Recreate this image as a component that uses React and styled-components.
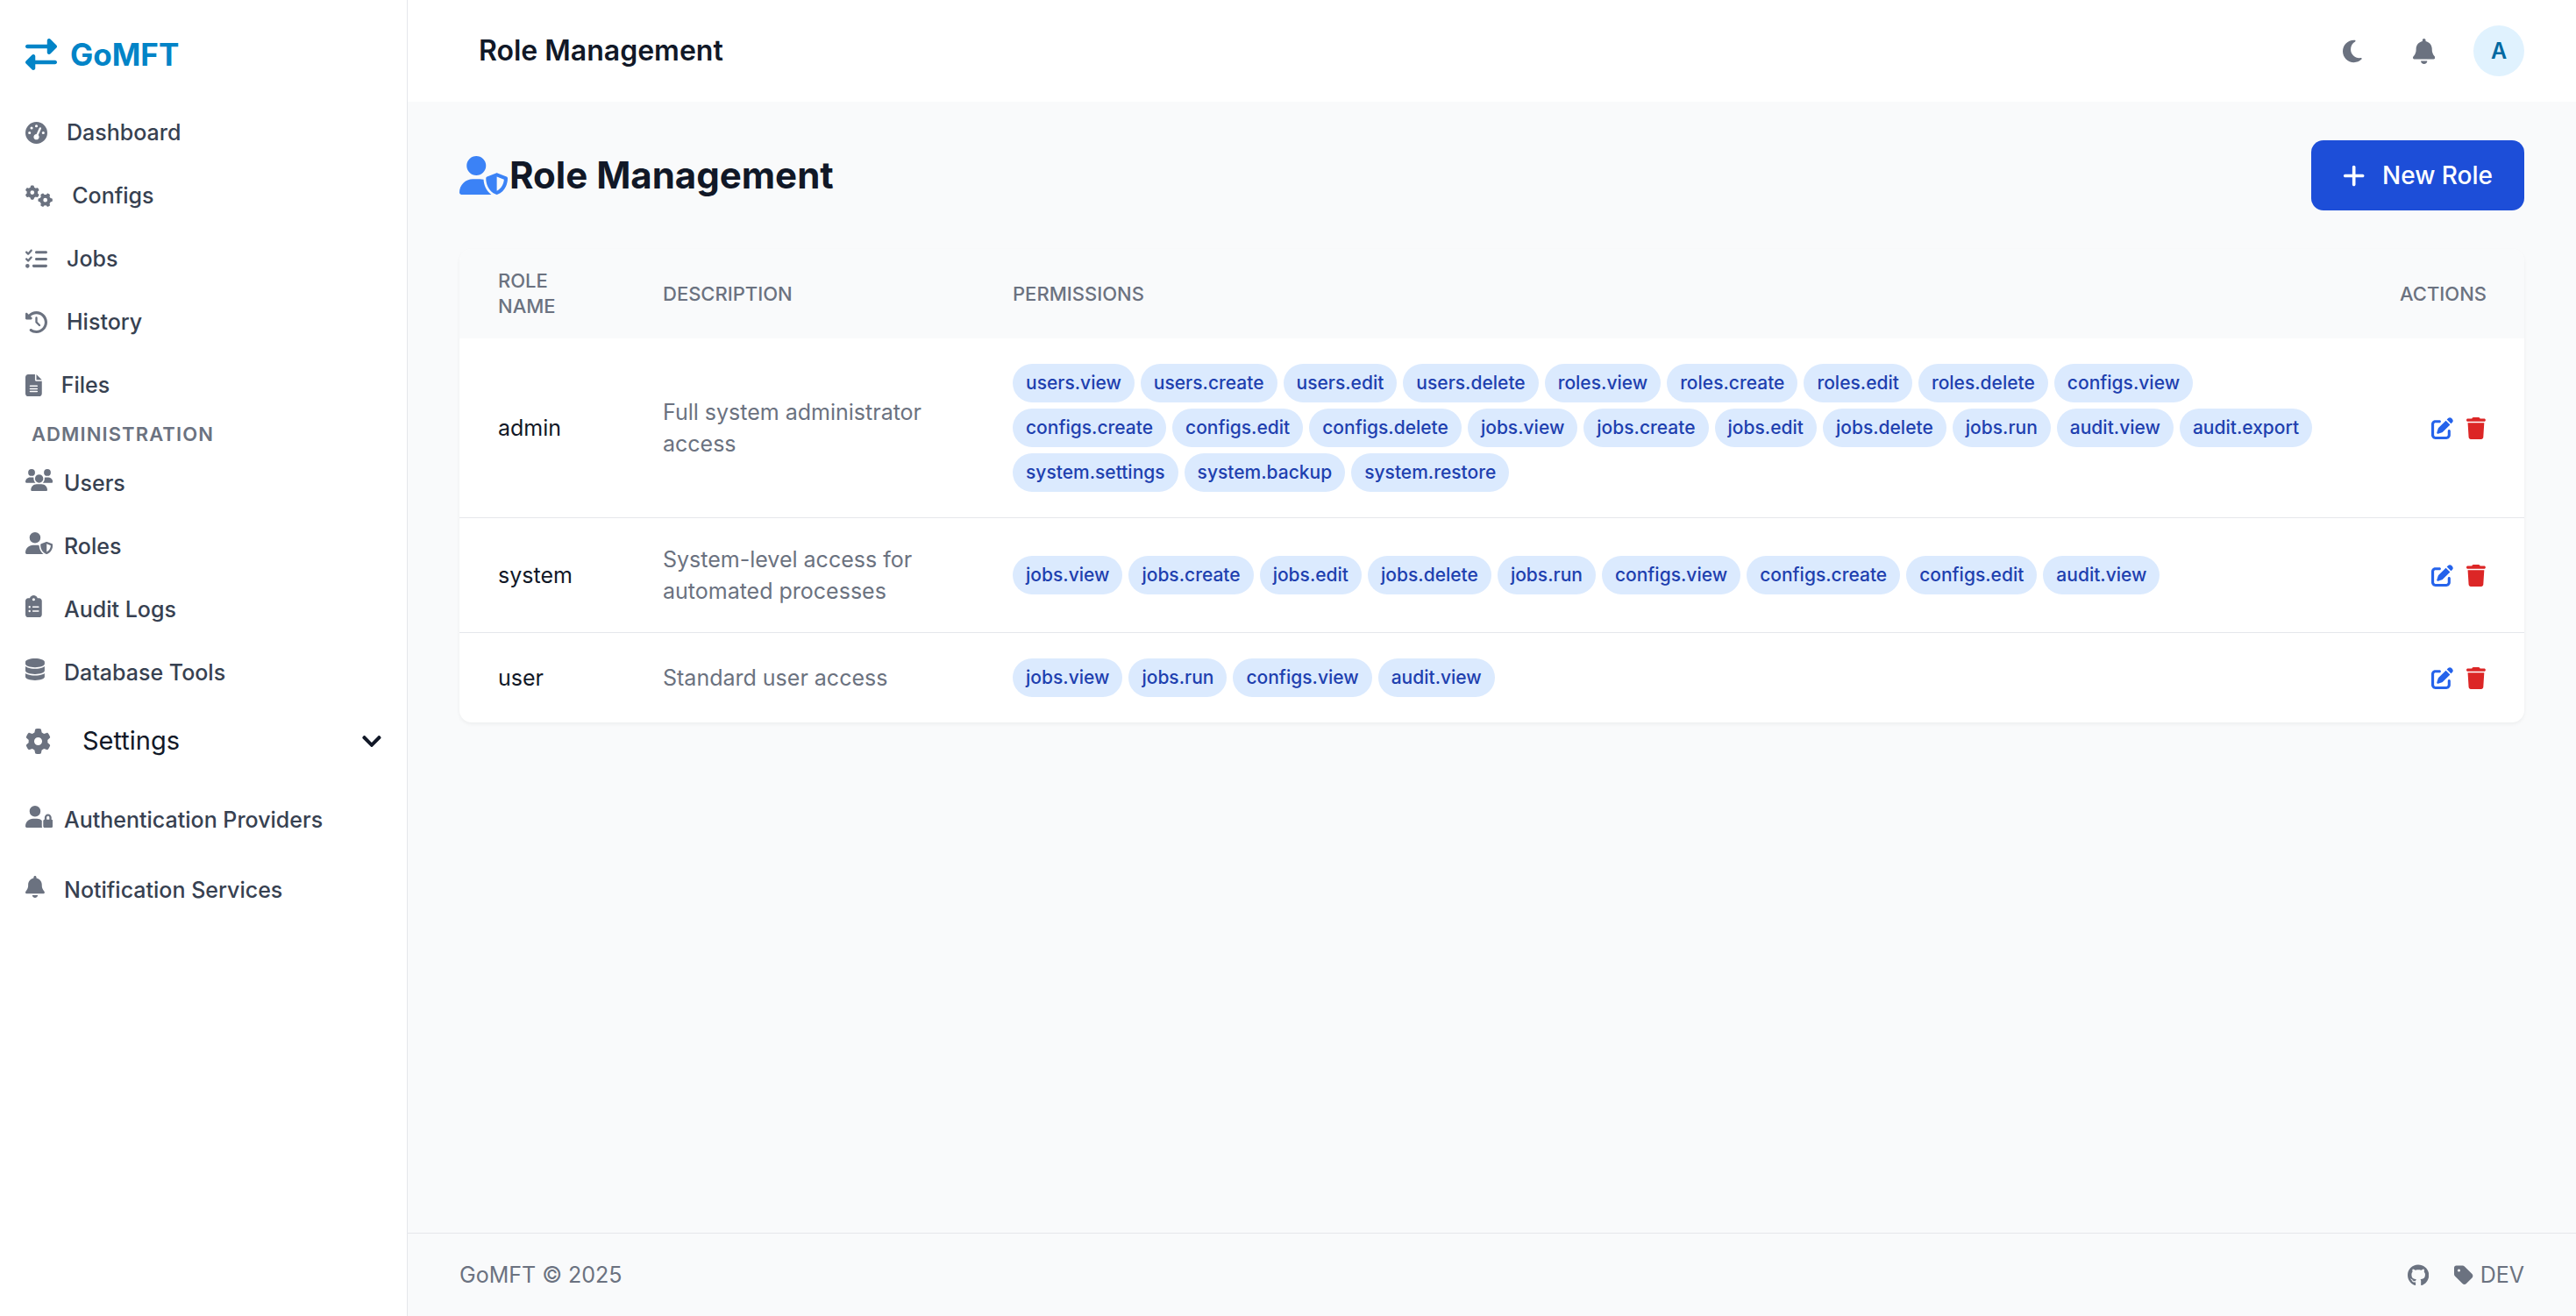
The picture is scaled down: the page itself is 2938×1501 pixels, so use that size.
import React from "react";
import styled, { createGlobalStyle, css } from "styled-components";
import { IconContext } from "react-icons";
import { FaChevronDown } from "react-icons/fa";
import {
  FaBell,
  FaClipboardList,
  FaClockRotateLeft,
  FaDatabase,
  FaFileLines,
  FaGaugeHigh,
  FaGear,
  FaGears,
  FaGithub,
  FaListCheck,
  FaMoon,
  FaPenToSquare,
  FaPlus,
  FaRightLeft,
  FaTag,
  FaTrash,
  FaUserLock,
  FaUserShield,
  FaUsers,
} from "react-icons/fa6";

const color = {
  ink: "#111827",
  text: "#374151",
  muted: "#6b7280",
  line: "#e5e7eb",
  page: "#f9fafb",
  brand: "#0284c7",
};

// Glyphs keep the proportions of their own viewBox; Icon sets the height.
const iconDefaults = { size: "auto" };

const GlobalStyle = createGlobalStyle`
  *, *::before, *::after { box-sizing: border-box; }
  body {
    margin: 0;
    font-family: Inter, "Liberation Sans", sans-serif;
    font-size: 25px;
    line-height: 36px;
    color: ${color.ink};
    background: ${color.page};
  }
  h1, h2, p, ul { margin: 0; padding: 0; }
  ul { list-style: none; }
  a { color: inherit; text-decoration: none; }
  button { font: inherit; color: inherit; border: 0; background: none; padding: 0; cursor: pointer; }
  svg { display: block; flex: none; }
`;

const Icon = styled.span`
  display: flex;
  flex: none;
  color: ${(p) => p.$color || "inherit"};

  svg {
    width: auto;
    height: ${(p) => p.$size || 25}px;
  }
`;

const Shell = styled.div`
  display: flex;
  min-height: 100vh;
`;

/* ---------- sidebar ---------- */

const Sidebar = styled.aside`
  flex: none;
  width: 465px;
  background: #fff;
  border-right: 1px solid ${color.line};
`;

const Brand = styled.a`
  display: flex;
  align-items: center;
  gap: 15px;
  padding: 40px 29px 35px;
  font-size: 35px;
  font-weight: 700;
  line-height: 44px;
  color: ${color.brand};
`;

const NavList = styled.ul`
  display: flex;
  flex-direction: column;
  gap: 8px;
  margin-top: ${(p) => p.$top || 0}px;
`;

const navRow = css`
  display: flex;
  width: 100%;
  padding: 14px 29px;
`;

const NavLink = styled.a`
  ${navRow}
  align-items: center;
  gap: 22px;
  font-weight: 500;
  color: ${color.text};
`;

const SlottedLink = styled.a`
  ${navRow}
  align-items: baseline;
  font-weight: 500;
  line-height: ${(p) => (p.$tall ? 44 : 36)}px;
  color: ${color.text};

  ${Icon} {
    width: 44px;
  }
`;

const SectionLabel = styled.h2`
  padding: 0 36px;
  margin: 8px 0;
  font-size: 22px;
  font-weight: 600;
  line-height: 32px;
  letter-spacing: 0.05em;
  text-transform: uppercase;
  color: ${color.muted};
`;

const SettingsToggle = styled.button`
  ${navRow}
  align-items: center;
  margin-top: 10px;
  font-size: 29px;
  line-height: 44px;
  text-align: left;
`;

const SettingsText = styled.span`
  flex: 1;
  padding-left: 36px;
`;

/* ---------- header and footer ---------- */

const Column = styled.div`
  display: flex;
  flex: 1;
  flex-direction: column;
  min-width: 0;
`;

const Header = styled.header`
  display: flex;
  align-items: center;
  justify-content: space-between;
  padding: 29px 59px 29px 81px;
  background: #fff;
`;

const HeaderTitle = styled.p`
  font-size: 32px;
  font-weight: 600;
  line-height: 44px;
`;

const HeaderTools = styled.div`
  display: flex;
  align-items: center;
  gap: 30px;
`;

const ToolButton = styled.button`
  display: flex;
  padding: 14px;
`;

const Avatar = styled.button`
  width: 58px;
  height: 58px;
  border-radius: 50%;
  font-weight: 600;
  text-align: center;
  color: #0369a1;
  background: #e0f2fe;
`;

const Footer = styled.footer`
  display: flex;
  align-items: center;
  justify-content: space-between;
  padding: 29px 59px;
  border-top: 1px solid ${color.line};
  color: ${color.muted};
`;

const FooterLinks = styled.div`
  display: flex;
  align-items: center;
  gap: 29px;
`;

const Version = styled.span`
  display: flex;
  align-items: center;
  gap: 8px;
`;

/* ---------- page ---------- */

const Main = styled.main`
  flex: 1;
  padding: 44px 59px;
`;

const PageHead = styled.div`
  display: flex;
  align-items: center;
  justify-content: space-between;
  margin-bottom: 44px;
`;

const PageTitle = styled.h1`
  display: flex;
  align-items: center;
  gap: 2px;
  font-size: 42px;
  font-weight: 700;
  line-height: 58px;
`;

const PrimaryButton = styled.button`
  display: flex;
  align-items: center;
  gap: 20px;
  padding: 18px 36px;
  border-radius: 14px;
  font-size: 28px;
  font-weight: 500;
  line-height: 44px;
  color: #fff;
  background: #1d4ed8;
`;

const Card = styled.div`
  overflow: hidden;
  border-radius: 14px;
  background: #fff;
  box-shadow: 0 2px 4px rgba(0, 0, 0, 0.05);
`;

const Table = styled.table`
  width: 100%;
  table-layout: fixed;
  border-collapse: separate;
  border-spacing: 0;
`;

const HeadCell = styled.th`
  width: ${(p) => (p.$width ? `${p.$width}px` : "auto")};
  padding: 22px 44px;
  font-size: 22px;
  font-weight: 500;
  line-height: 29px;
  text-align: ${(p) => (p.$end ? "right" : "left")};
  text-transform: uppercase;
  color: ${color.muted};
  background: ${color.page};
`;

const Row = styled.tr`
  &:not(:last-child) > td {
    border-bottom: 1px solid ${color.line};
  }
`;

const Cell = styled.td`
  padding: 29px 44px;
  color: ${(p) => (p.$muted ? color.muted : color.ink)};
`;

const Badges = styled.ul`
  display: flex;
  flex-wrap: wrap;
  gap: 7px;
`;

const Badge = styled.li`
  padding: 7px 15px;
  border-radius: 22px;
  font-size: 21px;
  font-weight: 500;
  line-height: 30px;
  color: #1e40af;
  background: #dbeafe;
`;

const Actions = styled.div`
  display: flex;
  justify-content: flex-end;
  gap: 15px;
`;

const mainNav = [
  ["Dashboard", FaGaugeHigh],
  ["Configs", FaGears],
  ["Jobs", FaListCheck],
  ["History", FaClockRotateLeft],
  ["Files", FaFileLines],
];

const adminNav = [
  ["Users", FaUsers],
  ["Roles", FaUserShield],
  ["Audit Logs", FaClipboardList],
  ["Database Tools", FaDatabase],
];

const settingsNav = [
  ["Authentication Providers", FaUserLock],
  ["Notification Services", FaBell],
];

const roles = [
  {
    name: "admin",
    description: "Full system administrator access",
    permissions: [
      "users.view", "users.create", "users.edit", "users.delete",
      "roles.view", "roles.create", "roles.edit", "roles.delete",
      "configs.view", "configs.create", "configs.edit", "configs.delete",
      "jobs.view", "jobs.create", "jobs.edit", "jobs.delete", "jobs.run",
      "audit.view", "audit.export",
      "system.settings", "system.backup", "system.restore",
    ],
  },
  {
    name: "system",
    description: "System-level access for automated processes",
    permissions: [
      "jobs.view", "jobs.create", "jobs.edit", "jobs.delete", "jobs.run",
      "configs.view", "configs.create", "configs.edit", "audit.view",
    ],
  },
  {
    name: "user",
    description: "Standard user access",
    permissions: ["jobs.view", "jobs.run", "configs.view", "audit.view"],
  },
];

function SlottedNav({ items, tall, top }) {
  return (
    <NavList $top={top}>
      {items.map(([label, Glyph]) => (
        <li key={label}>
          <SlottedLink href="#" $tall={tall}>
            <Icon $color={color.muted}><Glyph /></Icon>
            {label}
          </SlottedLink>
        </li>
      ))}
    </NavList>
  );
}

function RoleRow({ role }) {
  return (
    <Row>
      <Cell>{role.name}</Cell>
      <Cell $muted>{role.description}</Cell>
      <Cell>
        <Badges>
          {role.permissions.map((permission) => (
            <Badge key={permission}>{permission}</Badge>
          ))}
        </Badges>
      </Cell>
      <Cell>
        <Actions>
          <a href="#" aria-label={`Edit ${role.name}`}>
            <Icon $color="#2563eb"><FaPenToSquare /></Icon>
          </a>
          <button type="button" aria-label={`Delete ${role.name}`}>
            <Icon $color="#dc2626"><FaTrash /></Icon>
          </button>
        </Actions>
      </Cell>
    </Row>
  );
}

export default function App() {
  return (
    <IconContext.Provider value={iconDefaults}>
      <GlobalStyle />
      <Shell>
        <Sidebar>
          <Brand href="#">
            <Icon $size={36}><FaRightLeft /></Icon>
            GoMFT
          </Brand>
          <nav>
            <NavList>
              {mainNav.map(([label, Glyph]) => (
                <li key={label}>
                  <NavLink href="#">
                    <Icon $color={color.muted}><Glyph /></Icon>
                    {label}
                  </NavLink>
                </li>
              ))}
            </NavList>
            <SectionLabel>Administration</SectionLabel>
            <SlottedNav items={adminNav} />
            <SettingsToggle type="button" aria-expanded="true">
              <Icon $size={29} $color={color.muted}><FaGear /></Icon>
              <SettingsText>Settings</SettingsText>
              <Icon><FaChevronDown /></Icon>
            </SettingsToggle>
            <SlottedNav items={settingsNav} tall top={18} />
          </nav>
        </Sidebar>

        <Column>
          <Header>
            <HeaderTitle>Role Management</HeaderTitle>
            <HeaderTools>
              <ToolButton type="button" aria-label="Toggle dark mode">
                <Icon $size={29} $color={color.muted}><FaMoon /></Icon>
              </ToolButton>
              <ToolButton type="button" aria-label="Notifications">
                <Icon $size={29} $color={color.muted}><FaBell /></Icon>
              </ToolButton>
              <Avatar type="button">A</Avatar>
            </HeaderTools>
          </Header>

          <Main>
            <PageHead>
              <PageTitle>
                <Icon $size={44} $color="#3b82f6"><FaUserShield /></Icon>
                Role Management
              </PageTitle>
              <PrimaryButton type="button">
                <Icon $size={29}><FaPlus /></Icon>
                New Role
              </PrimaryButton>
            </PageHead>

            <Card>
              <Table>
                <thead>
                  <tr>
                    <HeadCell scope="col" $width={188}>Role Name</HeadCell>
                    <HeadCell scope="col" $width={399}>Description</HeadCell>
                    <HeadCell scope="col">Permissions</HeadCell>
                    <HeadCell scope="col" $width={186} $end>Actions</HeadCell>
                  </tr>
                </thead>
                <tbody>
                  {roles.map((role) => (
                    <RoleRow key={role.name} role={role} />
                  ))}
                </tbody>
              </Table>
            </Card>
          </Main>

          <Footer>
            <p>GoMFT © 2025</p>
            <FooterLinks>
              <a href="#" aria-label="GitHub"><Icon><FaGithub /></Icon></a>
              <Version>
                <Icon><FaTag /></Icon>
                DEV
              </Version>
            </FooterLinks>
          </Footer>
        </Column>
      </Shell>
    </IconContext.Provider>
  );
}
